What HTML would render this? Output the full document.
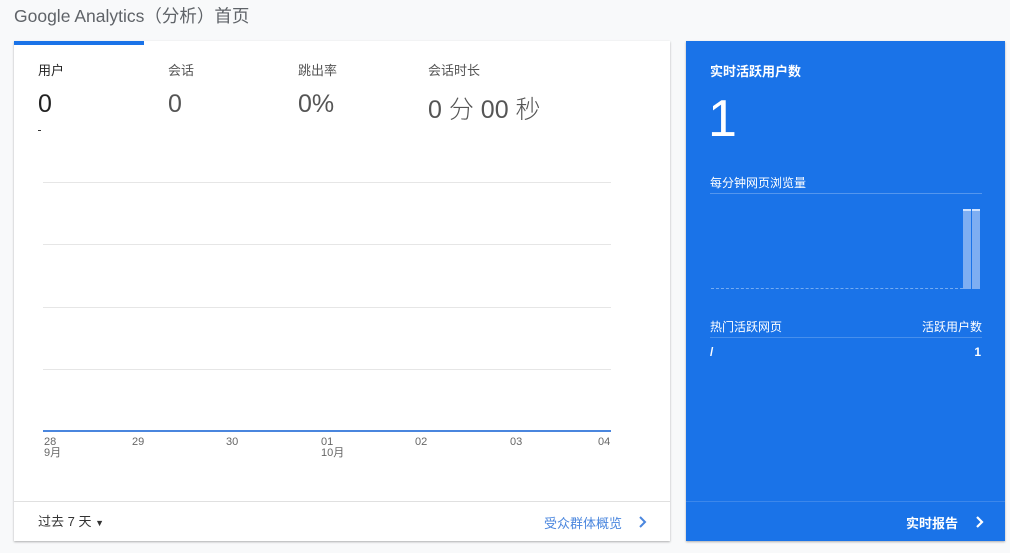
<!DOCTYPE html>
<html><head><meta charset="utf-8"><style>
*{margin:0;padding:0;box-sizing:border-box}
body{width:1010px;height:553px;background:#f8f9fa;font-family:"Liberation Sans","Noto Sans CJK SC",sans-serif;position:relative;overflow:hidden;color:#212121}
.a{position:absolute;white-space:nowrap}
.card{position:absolute;left:14px;top:41px;width:656px;height:500px;background:#fff;box-shadow:0 1px 2px rgba(0,0,0,.3)}
.rt{position:absolute;left:686px;top:41px;width:319px;height:500px;background:#1a73e8;box-shadow:0 1px 2px rgba(0,0,0,.3);color:#fff}
.g{position:absolute;left:29px;width:568px;height:1px;background:#e6e6e6}
.lab{font-size:13px;color:#555}
.val{font-size:25px;font-weight:300;color:#555}
.x{font-size:11px;color:#666;line-height:11px}
</style></head><body>
<div class="a" style="left:14px;top:3px;font-size:17.5px;color:#5f6368">Google Analytics（分析）首页</div>
<div class="card">
 <div class="a" style="left:0;top:0;width:130px;height:4px;background:#1a73e8"></div>
 <div class="a lab" style="left:24px;top:19px;color:#222">用户</div>
 <div class="a lab" style="left:154px;top:19px">会话</div>
 <div class="a lab" style="left:284px;top:19px">跳出率</div>
 <div class="a lab" style="left:414px;top:19px">会话时长</div>
 <div class="a val" style="left:24px;top:49px;color:#222;font-weight:400">0</div>
 <div class="a val" style="left:154px;top:49px">0</div>
 <div class="a val" style="left:284px;top:49px">0%</div>
 <div class="a val" style="left:414px;top:49px">0 分 00 秒</div>
 <div class="a" style="left:24px;top:89px;width:3px;height:1px;background:#333"></div>
 <div class="g" style="top:141px"></div>
 <div class="g" style="top:203px"></div>
 <div class="g" style="top:266px"></div>
 <div class="g" style="top:328px"></div>
 <div class="a" style="left:29px;top:389px;width:568px;height:2px;background:#4a86de"></div>
 <div class="a x" style="left:30px;top:396px">28<br>9月</div>
 <div class="a x" style="left:118px;top:396px">29</div>
 <div class="a x" style="left:212px;top:396px">30</div>
 <div class="a x" style="left:307px;top:396px">01<br>10月</div>
 <div class="a x" style="left:401px;top:396px">02</div>
 <div class="a x" style="left:496px;top:396px">03</div>
 <div class="a x" style="left:584px;top:396px">04</div>
 <div class="a" style="left:0;top:460px;width:656px;height:1px;background:#e0e0e0"></div>
 <div class="a" style="left:24px;top:470px;font-size:13px;color:#333">过去 7 天 <span style="font-size:9px">▼</span></div>
 <div class="a" style="left:530px;top:472px;font-size:13px;color:#4a86de">受众群体概览</div>
 <svg class="a" style="left:624px;top:474px" width="10" height="14"><path d="M2 2l5 5-5 5" stroke="#4a86de" stroke-width="2" fill="none"/></svg>
</div>
<div class="rt">
 <div class="a" style="left:24px;top:20px;font-size:13px;font-weight:bold">实时活跃用户数</div>
 <div class="a" style="left:22px;top:48px;font-size:52px;font-weight:300;line-height:60px">1</div>
 <div class="a" style="left:24px;top:133px;font-size:12px">每分钟网页浏览量</div>
 <div class="a" style="left:24px;top:152px;width:272px;height:1px;background:rgba(255,255,255,.25)"></div>
 <div class="a" style="left:25px;top:247px;width:252px;height:0;border-top:1px dashed rgba(255,255,255,.4)"></div>
 <div class="a" style="left:277px;top:168px;width:8px;height:80px;background:#7eaef2;border-top:2px solid #d0e3ff"></div>
 <div class="a" style="left:286px;top:168px;width:8px;height:80px;background:#7eaef2;border-top:2px solid #d0e3ff"></div>
 <div class="a" style="left:24px;top:277px;font-size:12px">热门活跃网页</div>
 <div class="a" style="right:23px;top:277px;font-size:12px">活跃用户数</div>
 <div class="a" style="left:24px;top:296px;width:272px;height:1px;background:rgba(255,255,255,.2)"></div>
 <div class="a" style="left:24px;top:304px;font-size:12px;font-weight:bold">/</div>
 <div class="a" style="right:24px;top:304px;font-size:12px;font-weight:bold">1</div>
 <div class="a" style="left:0;top:460px;width:319px;height:1px;background:rgba(255,255,255,.15)"></div>
 <div class="a" style="left:220px;top:472px;font-size:13px;font-weight:bold">实时报告</div>
 <svg class="a" style="left:289px;top:474px" width="10" height="14"><path d="M2 2l5 5-5 5" stroke="#fff" stroke-width="2.2" fill="none"/></svg>
</div>
</body></html>
